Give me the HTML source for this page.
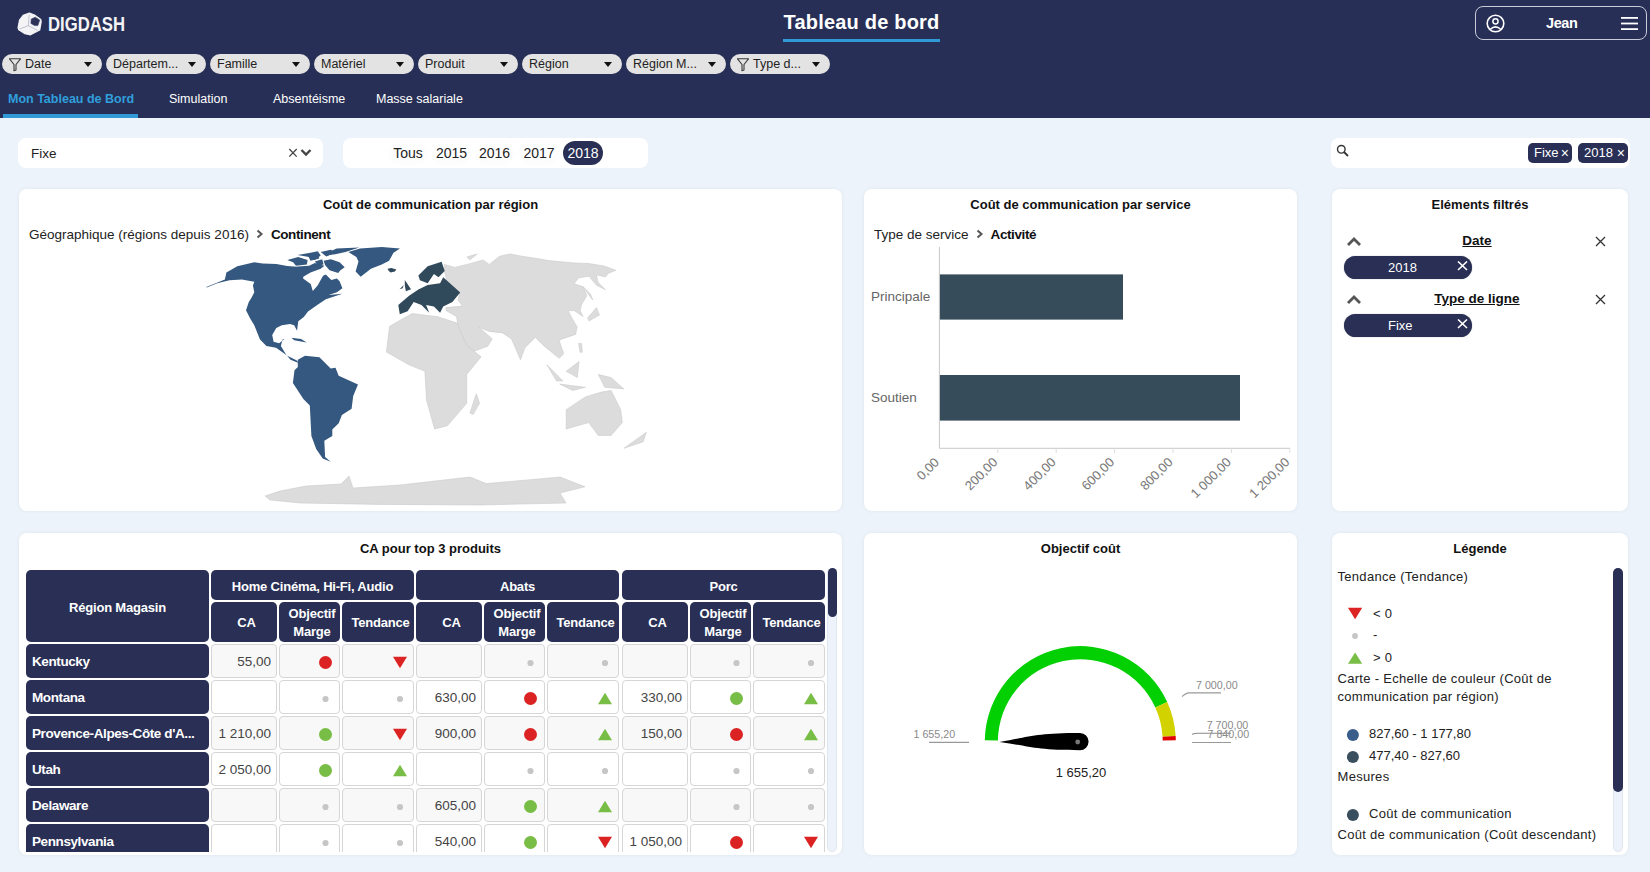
<!DOCTYPE html>
<html><head><meta charset="utf-8">
<style>
*{box-sizing:border-box;margin:0;padding:0}
html,body{width:1650px;height:872px;overflow:hidden}
body{background:#ecf3fb;font-family:"Liberation Sans",sans-serif;position:relative;color:#222}
.abs{position:absolute}
#hdr{position:absolute;left:0;top:0;width:1650px;height:118px;background:#282f56}
.logo-t{position:absolute;left:48px;top:12px;color:#f4f4f6;font-weight:bold;font-size:19px;letter-spacing:0.6px}
.title{position:absolute;left:773px;top:11px;width:177px;text-align:center;color:#fff;font-size:20px;font-weight:bold;white-space:nowrap;letter-spacing:0.2px}
.title-ul{position:absolute;left:783px;top:39px;width:157px;height:2.5px;background:#2f9ad6}
.user{position:absolute;left:1475px;top:6px;width:172px;height:34px;border:1px solid #c9cbd6;border-radius:8px}
.pill{position:absolute;top:54px;width:100px;height:20px;background:#e3e3e3;border-radius:10px;font-size:12.5px;color:#222;line-height:20px;padding-left:7px;white-space:nowrap}
.pill .car{position:absolute;right:10px;top:8px;width:0;height:0;border-left:4.5px solid transparent;border-right:4.5px solid transparent;border-top:5px solid #111}
.tab{position:absolute;top:92px;font-size:12.5px;color:#fff;white-space:nowrap}
.tab.act{color:#2f9fdc;font-weight:bold}
.tab-ul{position:absolute;left:3px;top:114px;width:135px;height:4px;background:#2f9ad6}
.box{position:absolute;background:#fff;border-radius:8px}
.panel{position:absolute;background:#fff;border-radius:8px;box-shadow:0 0 4px rgba(0,0,0,0.06)}
.ptitle{position:absolute;left:0;width:100%;top:8px;text-align:center;font-weight:bold;font-size:13px;color:#111;white-space:nowrap}
.yr{position:absolute;top:3px;height:24px;line-height:24px;text-align:center;font-size:14px;color:#222;border-radius:12px;background:#fdfdfd}
.yr.sel{background:#292f55;color:#fff}
.tag{position:absolute;top:5px;height:20px;line-height:20px;background:#292f55;color:#fff;border-radius:5px;font-size:13px;padding-left:6px;white-space:nowrap}
.tag .tx{position:absolute;right:3px;top:0;font-size:14px}
.fg{position:absolute;left:0;width:296px;height:50px}
.fgt{position:absolute;left:0;width:290px;top:0px;text-align:center;font-weight:bold;font-size:13.5px;color:#111;text-decoration:underline;text-underline-offset:1px}
.fpill{position:absolute;left:12px;top:23px;width:128px;height:23px;border-radius:11.5px;background:#292f55;color:#fff;font-size:13px;line-height:23px;padding-left:44px;box-shadow:0 0 1px #777}
.crumb{position:absolute;font-size:13.5px;color:#222;white-space:nowrap}
.crumb b{color:#111;letter-spacing:-0.4px}
.th{position:absolute;background:#292f55;color:#fff;font-weight:bold;font-size:13px;text-align:center;border-radius:5px;white-space:nowrap;padding-top:2px;letter-spacing:-0.2px}
.ths{padding-left:5px}
.th2{line-height:18px}
.rh{position:absolute;width:183px;height:34px;background:#292f55;color:#fff;font-weight:bold;font-size:13.5px;line-height:34px;padding-left:6px;padding-top:1px;border-radius:5px;white-space:nowrap;letter-spacing:-0.4px}
.td{position:absolute;height:34px;border:1px solid #d6d6d6;border-radius:4px;font-size:13.5px;color:#444;text-align:right;line-height:33px;padding-right:5px;white-space:nowrap}
.sbt{position:absolute;width:10px;background:#eef3fb;border:1px solid #e0e6ef;border-radius:5px}
.sbh{position:absolute;width:9px;background:#292f55;border-radius:5px}
.lg{position:absolute;color:#222;white-space:nowrap;line-height:1;letter-spacing:0.3px}
</style></head><body>
<div id="hdr">
  <svg class="abs" style="left:14px;top:8px" width="34" height="32" viewBox="0 0 34 32">
<path d="M15.42 4.96 L20.56 6.98 L26.80 11.38 L27.17 13.95 L25.70 22.03 L16.52 26.80 L11.01 25.70 L4.77 21.66 L4.04 19.82 L5.51 12.11 L9.18 7.34 Z" fill="#f4f4f6" stroke="#f4f4f6" stroke-width="1.2" stroke-linejoin="round"/>
<path d="M17.25 11.01 L21.29 9.18 L25.70 12.11 L23.86 17.62 L20.56 17.62 L16.89 15.42 Z" fill="#2b3157" stroke="#3b4066" stroke-width="0.6" stroke-linejoin="round"/>
<path d="M14.32 17.62 L15.23 6.61 M14.32 17.62 L5.87 20.93 M14.32 17.62 L23.49 22.39" stroke="#a9abbd" stroke-width="0.7" fill="none"/>
</svg>
  <svg class="abs" style="left:47px;top:12px" width="82" height="24" viewBox="0 0 82 24"><text x="1" y="19.2" font-family="Liberation Sans" font-weight="bold" font-size="19.5" fill="#f4f4f6" textLength="77" lengthAdjust="spacingAndGlyphs">DIGDASH</text></svg>
  <div class="title">Tableau de bord</div>
  <div class="title-ul"></div>
  <div class="user">
    <svg class="abs" style="left:10px;top:7px" width="19" height="19" viewBox="0 0 19 19"><circle cx="9.5" cy="9.5" r="8.3" fill="none" stroke="#fff" stroke-width="1.6"/><circle cx="9.5" cy="7.3" r="2.6" fill="none" stroke="#fff" stroke-width="1.5"/><path d="M4.3 15.3 Q9.5 10.5 14.7 15.3" fill="none" stroke="#fff" stroke-width="1.5"/></svg>
    <div class="abs" style="left:70px;top:8px;color:#fff;font-size:14.5px;font-weight:bold;letter-spacing:-0.4px">Jean</div>
    <svg class="abs" style="left:145px;top:9px" width="17" height="15" viewBox="0 0 17 15"><rect x="0" y="1" width="17" height="1.8" fill="#fff"/><rect x="0" y="6.6" width="17" height="1.8" fill="#fff"/><rect x="0" y="12.2" width="17" height="1.8" fill="#fff"/></svg>
  </div>
  <div class="pill" style="left:2px;padding-left:23px"><svg class="abs" style="left:6px;top:3px" width="14" height="15" viewBox="0 0 14 15"><path d="M1.5 1.8 H12.5 L8 7.5 V13 L6 13.8 V7.5 Z" fill="none" stroke="#3a3a3a" stroke-width="1.1" stroke-linejoin="round"/></svg>Date<span class="car"></span></div>
  <div class="pill" style="left:106px">Départem...<span class="car"></span></div>
  <div class="pill" style="left:210px">Famille<span class="car"></span></div>
  <div class="pill" style="left:314px">Matériel<span class="car"></span></div>
  <div class="pill" style="left:418px">Produit<span class="car"></span></div>
  <div class="pill" style="left:522px">Région<span class="car"></span></div>
  <div class="pill" style="left:626px">Région M...<span class="car"></span></div>
  <div class="pill" style="left:730px;padding-left:23px"><svg class="abs" style="left:6px;top:3px" width="14" height="15" viewBox="0 0 14 15"><path d="M1.5 1.8 H12.5 L8 7.5 V13 L6 13.8 V7.5 Z" fill="none" stroke="#3a3a3a" stroke-width="1.1" stroke-linejoin="round"/></svg>Type d...<span class="car"></span></div>
  <div class="tab act" style="left:8px">Mon Tableau de Bord</div>
  <div class="tab" style="left:169px">Simulation</div>
  <div class="tab" style="left:273px">Absentéisme</div>
  <div class="tab" style="left:376px">Masse salariale</div>
  <div class="tab-ul"></div>
</div>

<!-- controls -->
<div class="box" style="left:18px;top:138px;width:305px;height:30px">
  <div class="abs" style="left:13px;top:8px;font-size:13.5px;color:#222">Fixe</div>
  <svg class="abs" style="left:270px;top:10px" width="24" height="10" viewBox="0 0 24 10"><path d="M1.3 1 L8.7 8.6 M8.7 1 L1.3 8.6" stroke="#444" stroke-width="1.3"/><path d="M13.5 2 L18 6.5 L22.5 2" stroke="#444" stroke-width="2.4" fill="none"/></svg>
</div>
<div class="box" style="left:343px;top:138px;width:305px;height:30px">
  <div class="yr" style="left:45px;width:40px">Tous</div>
  <div class="yr" style="left:89px;width:39px">2015</div>
  <div class="yr" style="left:132px;width:39px">2016</div>
  <div class="yr" style="left:176px;width:40px">2017</div>
  <div class="yr sel" style="left:220px;width:40px">2018</div>
</div>
<div class="box" style="left:1331px;top:138px;width:299px;height:30px">
  <svg class="abs" style="left:5px;top:6px" width="14" height="14" viewBox="0 0 14 14"><circle cx="5.3" cy="5.3" r="3.8" fill="none" stroke="#333" stroke-width="1.4"/><path d="M8 8 L12 12" stroke="#333" stroke-width="1.8"/></svg>
  <div class="tag" style="left:197px;width:44px">Fixe<span class="tx">×</span></div>
  <div class="tag" style="left:247px;width:50px">2018<span class="tx">×</span></div>
</div>

<!-- panels -->
<div class="panel" style="left:19px;top:189px;width:823px;height:322px"><div class="ptitle">Coût de communication par région</div>
  <div class="crumb" style="left:10px;top:38px">Géographique (régions depuis 2016)<svg style="margin:0 7px 0 7px;vertical-align:0px" width="8" height="10" viewBox="0 0 8 10"><path d="M1.5 1.5 L5.5 5 L1.5 8.5" stroke="#555" stroke-width="2" fill="none"/></svg><b>Continent</b></div>
  <!--MAP--><svg class="abs" style="left:0;top:0" width="823" height="322" viewBox="19 189 823 322"><path fill="#34587f" d="M206.3 287.1 L224.9 279.6 L226.4 272.5 L237.3 266.3 L254.3 262.3 L262.6 263.4 L276.3 264.1 L287.3 266.1 L297.0 266.8 L297.5 266.5 L309.1 265.8 L314.9 262.9 L319.3 264.4 L324.4 265.8 L320.7 268.7 L310.5 272.4 L303.3 276.7 L303.1 278.5 L310.7 284.0 L312.8 290.9 L317.6 285.4 L323.1 275.8 L325.8 274.4 L331.3 279.9 L336.9 278.5 L339.6 281.3 L342.4 288.2 L336.9 292.3 L328.6 295.0 L342.4 293.7 L325.8 299.2 L317.6 304.7 L308.0 311.5 L303.8 317.1 L298.3 321.2 L297.0 330.8 L294.2 325.3 L290.1 323.9 L281.8 325.3 L276.3 328.1 L272.2 334.9 L273.6 341.8 L279.1 343.2 L284.6 339.1 L282.5 339.6 L280.9 346.1 L285.7 354.1 L290.5 359.7 L298.6 362.9 L296.9 360.5 L287.3 355.7 L276.1 347.7 L266.4 346.1 L260.0 339.6 L254.3 325.3 L250.2 318.4 L246.0 310.2 L248.8 301.9 L251.5 297.8 L254.3 292.3 L252.9 285.4 L255.0 279.9 L254.3 281.8 L241.9 279.6 L229.5 280.2 L217.2 283.3 L206.8 287.6 Z"/><path fill="#34587f" d="M348.4 252.0 L360.0 248.4 L381.8 246.9 L400.0 248.4 L393.5 252.7 L389.1 260.7 L381.8 264.4 L370.9 268.7 L360.7 276.7 L355.6 271.6 L358.5 261.5 L356.4 257.1 Z"/><path fill="#34587f" d="M323.6 260.7 L330.9 259.3 L339.6 262.2 L344.7 267.3 L340.4 270.2 L338.2 273.1 L329.5 270.2 L325.1 265.1 Z"/><path fill="#34587f" d="M336.7 248.4 L359.3 247.6 L345.5 252.0 L335.3 254.2 L325.1 255.6 L323.6 254.2 Z"/><path fill="#34587f" d="M287.3 260.0 L298.2 257.1 L307.6 260.0 L306.9 264.4 L296.0 265.8 L293.1 262.2 Z"/><path fill="#34587f" d="M297.5 254.9 L310.5 252.7 L317.8 251.3 L320.7 255.6 L314.9 260.0 L309.1 257.1 Z"/><path fill="#34587f" d="M314.9 261.5 L322.2 259.3 L323.6 264.4 L317.8 265.8 Z"/><path fill="#34587f" d="M320.7 252.0 L330.9 249.8 L335.3 252.7 L326.5 256.4 Z"/><path fill="#34587f" d="M307.6 254.9 L317.8 254.2 L319.3 258.5 L310.5 260.7 Z"/><path fill="#34587f" d="M291.4 337.7 L301.1 339.1 L306.6 342.5 L294.2 340.2 Z"/><path fill="#34587f" d="M297.8 359.7 L305.0 355.7 L319.4 357.3 L330.7 368.6 L335.5 367.8 L338.7 375.8 L358.0 384.6 L353.2 395.9 L351.6 408.7 L341.9 415.1 L338.7 423.2 L332.3 429.6 L332.3 436.0 L324.3 440.8 L325.1 456.9 L330.7 461.7 L322.7 458.5 L316.2 448.9 L311.4 436.0 L309.8 405.5 L303.4 399.1 L292.9 383.0 L294.5 370.2 L297.8 366.9 Z"/><path fill="#dcdcdc" stroke="#c4c4c4" stroke-width="0.5" d="M444.5 264.4 L454.9 267.4 L466.8 264.4 L483.2 259.9 L489.2 264.4 L499.6 256.2 L510.0 253.9 L522.0 256.2 L536.9 258.4 L548.8 260.6 L574.1 262.9 L589.0 263.6 L603.9 265.9 L615.9 270.3 L608.4 273.3 L605.4 277.0 L596.5 274.8 L598.0 282.3 L605.4 289.7 L596.5 285.2 L589.0 276.3 L578.6 277.8 L574.1 283.7 L583.1 286.7 L586.8 295.7 L581.6 304.6 L580.1 310.6 L583.1 316.5 L574.1 310.6 L568.2 310.6 L571.1 316.5 L577.1 327.0 L575.6 334.4 L562.2 338.9 L559.2 340.4 L563.7 353.8 L559.2 358.3 L551.8 352.3 L544.3 346.3 L535.4 337.4 L524.9 347.8 L520.5 359.8 L511.5 338.9 L502.6 332.9 L489.2 331.4 L478.7 327.0 L492.2 338.9 L487.7 346.3 L471.3 352.3 L459.4 332.9 L456.4 316.5 L446.0 310.6 L446.0 307.6 L462.4 306.1 L457.9 300.1 L459.4 294.2 L447.5 283.7 L444.5 271.8 Z"/><path fill="#dcdcdc" stroke="#c4c4c4" stroke-width="0.5" d="M587.5 318.0 L596.5 307.6 L599.5 315.0 L589.0 321.0 Z"/><path fill="#dcdcdc" stroke="#c4c4c4" stroke-width="0.5" d="M583.1 286.7 L590.5 294.2 L592.8 300.1 L588.3 294.2 Z"/><path fill="#dcdcdc" stroke="#c4c4c4" stroke-width="0.5" d="M578.6 343.4 L581.6 343.4 L582.3 352.3 L580.1 352.3 Z"/><path fill="#dcdcdc" stroke="#c4c4c4" stroke-width="0.5" d="M466.8 256.9 L477.3 253.9 L469.8 259.9 Z"/><path fill="#30495b" d="M398.3 305.0 L409.1 295.7 L418.4 289.5 L427.7 284.9 L440.1 283.3 L443.2 277.2 L460.2 292.6 L452.4 301.9 L443.2 306.6 L440.1 312.8 L433.9 306.6 L426.1 305.0 L429.2 312.8 L421.5 305.0 L413.7 301.9 L407.6 311.2 L399.8 314.3 Z"/><path fill="#30495b" d="M418.4 275.6 L427.7 266.3 L441.6 261.7 L444.7 271.0 L438.5 277.2 L433.9 274.1 L427.7 283.3 L419.9 280.2 Z"/><path fill="#30495b" d="M404.8 279.9 L411.0 289.2 L405.8 291.3 L404.8 285.1 Z"/><path fill="#30495b" d="M399.6 289.2 L403.7 285.1 L402.7 288.2 Z"/><path fill="#30495b" d="M387.6 268.7 L391.3 268.0 L396.4 269.5 L394.9 271.6 L390.5 272.4 L388.4 270.5 Z"/><path fill="#dcdcdc" stroke="#c4c4c4" stroke-width="0.5" d="M389.6 326.3 L412.1 313.5 L437.8 316.7 L457.0 323.1 L466.7 345.5 L481.1 356.8 L466.7 374.4 L466.7 403.3 L447.4 425.8 L434.6 429.0 L426.5 400.1 L424.9 371.2 L408.9 364.8 L386.4 352.0 Z"/><path fill="#dcdcdc" stroke="#c4c4c4" stroke-width="0.5" d="M469.9 413.0 L476.3 393.7 L479.5 403.3 L473.1 414.6 Z"/><path fill="#dcdcdc" stroke="#c4c4c4" stroke-width="0.5" d="M546.9 364.8 L563.0 380.9 L556.5 380.9 Z"/><path fill="#dcdcdc" stroke="#c4c4c4" stroke-width="0.5" d="M566.2 371.2 L579.0 361.6 L577.4 377.6 Z"/><path fill="#dcdcdc" stroke="#c4c4c4" stroke-width="0.5" d="M598.3 374.4 L611.1 377.6 L623.9 388.9 L604.7 387.3 Z"/><path fill="#dcdcdc" stroke="#c4c4c4" stroke-width="0.5" d="M559.7 384.1 L585.4 387.3 L572.6 390.5 Z"/><path fill="#dcdcdc" stroke="#c4c4c4" stroke-width="0.5" d="M566.2 409.7 L585.4 396.9 L601.5 392.1 L611.1 390.5 L620.7 409.7 L622.3 422.6 L611.1 435.4 L598.3 435.4 L588.6 422.6 L566.2 429.0 Z"/><path fill="#dcdcdc" stroke="#c4c4c4" stroke-width="0.5" d="M623.9 448.3 L646.4 432.2 L643.2 441.8 Z"/><path fill="#dcdcdc" stroke="#c4c4c4" stroke-width="0.5" d="M265.0 496.0 L280.0 491.0 L306.0 486.0 L341.0 484.0 L349.0 476.0 L353.0 488.0 L400.0 485.0 L470.0 477.0 L486.0 483.6 L560.0 477.0 L585.0 486.8 L560.0 493.0 L566.0 503.0 L480.0 505.0 L380.0 504.4 L300.0 503.0 L270.0 500.0 Z"/></svg><!--/MAP-->
</div>
<div class="panel" style="left:864px;top:189px;width:433px;height:322px"><div class="ptitle">Coût de communication par service</div>
  <div class="crumb" style="left:10px;top:38px">Type de service<svg style="margin:0 7px 0 7px;vertical-align:0px" width="8" height="10" viewBox="0 0 8 10"><path d="M1.5 1.5 L5.5 5 L1.5 8.5" stroke="#555" stroke-width="2" fill="none"/></svg><b>Activité</b></div>
  <svg class="abs" style="left:0;top:0" width="433" height="322" viewBox="0 0 433 322">
    <rect x="75.39999999999998" y="85.39999999999998" width="183.60000000000002" height="45.2" fill="#364c5b"/>
    <rect x="75.39999999999998" y="186" width="300.6" height="45.6" fill="#364c5b"/>
    <path d="M75.39999999999998 58 V259.3 H426" stroke="#c8c8c8" stroke-width="1" fill="none"/>
    <g font-family="Liberation Sans" font-size="13" fill="#777"><text x="75.9" y="274.0" transform="rotate(-45 75.9 274.0)" text-anchor="end">0,00</text><line x1="133.79999999999995" y1="259" x2="133.79999999999995" y2="264" stroke="#ddd" stroke-width="1"/><text x="134.3" y="274.0" transform="rotate(-45 134.3 274.0)" text-anchor="end">200,00</text><line x1="192.20000000000005" y1="259" x2="192.20000000000005" y2="264" stroke="#ddd" stroke-width="1"/><text x="192.7" y="274.0" transform="rotate(-45 192.7 274.0)" text-anchor="end">400,00</text><line x1="250.5999999999999" y1="259" x2="250.5999999999999" y2="264" stroke="#ddd" stroke-width="1"/><text x="251.1" y="274.0" transform="rotate(-45 251.1 274.0)" text-anchor="end">600,00</text><line x1="309" y1="259" x2="309" y2="264" stroke="#ddd" stroke-width="1"/><text x="309.5" y="274.0" transform="rotate(-45 309.5 274.0)" text-anchor="end">800,00</text><line x1="367.4000000000001" y1="259" x2="367.4000000000001" y2="264" stroke="#ddd" stroke-width="1"/><text x="367.9" y="274.0" transform="rotate(-45 367.9 274.0)" text-anchor="end">1 000,00</text><line x1="425.79999999999995" y1="259" x2="425.79999999999995" y2="264" stroke="#ddd" stroke-width="1"/><text x="426.3" y="274.0" transform="rotate(-45 426.3 274.0)" text-anchor="end">1 200,00</text></g>
    <text x="7" y="112" font-family="Liberation Sans" font-size="13.5" fill="#666">Principale</text>
    <text x="7" y="213" font-family="Liberation Sans" font-size="13.5" fill="#666">Soutien</text>
  </svg>
</div>
<div class="panel" style="left:1332px;top:189px;width:296px;height:322px"><div class="ptitle">Eléments filtrés</div>
  <div class="fg" style="top:44px"><svg class="abs" style="left:14px;top:3px" width="16" height="11" viewBox="0 0 16 11"><path d="M2 9 L8 3 L14 9" stroke="#555" stroke-width="2.8" fill="none"/></svg>
    <div class="fgt">Date</div>
    <svg class="abs" style="left:263px;top:3px" width="11" height="11" viewBox="0 0 11 11"><path d="M1 1 L10 10 M10 1 L1 10" stroke="#333" stroke-width="1.3"/></svg>
    <div class="fpill">2018<svg class="abs" style="left:113px;top:5px" width="11" height="10" viewBox="0 0 11 10"><path d="M1 0.5 L10 9 M10 0.5 L1 9" stroke="#fff" stroke-width="1.6"/></svg></div>
  </div>
  <div class="fg" style="top:102px"><svg class="abs" style="left:14px;top:3px" width="16" height="11" viewBox="0 0 16 11"><path d="M2 9 L8 3 L14 9" stroke="#555" stroke-width="2.8" fill="none"/></svg>
    <div class="fgt">Type de ligne</div>
    <svg class="abs" style="left:263px;top:3px" width="11" height="11" viewBox="0 0 11 11"><path d="M1 1 L10 10 M10 1 L1 10" stroke="#333" stroke-width="1.3"/></svg>
    <div class="fpill">Fixe<svg class="abs" style="left:113px;top:5px" width="11" height="10" viewBox="0 0 11 10"><path d="M1 0.5 L10 9 M10 0.5 L1 9" stroke="#fff" stroke-width="1.6"/></svg></div>
  </div>
</div>
<div class="panel" style="left:19px;top:533px;width:823px;height:322px"><div class="ptitle">CA pour top 3 produits</div>
  <!--TABLE--><div class="abs" style="left:0;top:0;width:823px;height:319px;overflow:hidden"><div class="th" style="left:7px;top:37px;width:183px;height:72px;line-height:72px">Région Magasin</div><div class="th" style="left:192px;top:37px;width:203px;height:30px;line-height:30px">Home Cinéma, Hi-Fi, Audio</div><div class="th ths" style="left:192px;top:69px;width:66px;height:40px;line-height:38px">CA</div><div class="th th2 ths" style="left:260px;top:69px;width:61px;height:40px;padding-top:3px;line-height:18px">Objectif<br>Marge</div><div class="th ths" style="left:323px;top:69px;width:72px;height:40px;line-height:38px">Tendance</div><div class="th" style="left:397px;top:37px;width:203px;height:30px;line-height:30px">Abats</div><div class="th ths" style="left:397px;top:69px;width:66px;height:40px;line-height:38px">CA</div><div class="th th2 ths" style="left:465px;top:69px;width:61px;height:40px;padding-top:3px;line-height:18px">Objectif<br>Marge</div><div class="th ths" style="left:528px;top:69px;width:72px;height:40px;line-height:38px">Tendance</div><div class="th" style="left:603px;top:37px;width:203px;height:30px;line-height:30px">Porc</div><div class="th ths" style="left:603px;top:69px;width:66px;height:40px;line-height:38px">CA</div><div class="th th2 ths" style="left:671px;top:69px;width:61px;height:40px;padding-top:3px;line-height:18px">Objectif<br>Marge</div><div class="th ths" style="left:734px;top:69px;width:72px;height:40px;line-height:38px">Tendance</div><div class="rh" style="left:7px;top:111px">Kentucky</div><div class="td" style="left:192px;top:111px;width:66px;background:#f8f8f8">55,00</div><div class="td" style="left:260px;top:111px;width:61px;background:#f8f8f8"></div><div class="td" style="left:323px;top:111px;width:72px;background:#f8f8f8"></div><div class="td" style="left:397px;top:111px;width:66px;background:#f8f8f8"></div><div class="td" style="left:465px;top:111px;width:61px;background:#f8f8f8"></div><div class="td" style="left:528px;top:111px;width:72px;background:#f8f8f8"></div><div class="td" style="left:603px;top:111px;width:66px;background:#f8f8f8"></div><div class="td" style="left:671px;top:111px;width:61px;background:#f8f8f8"></div><div class="td" style="left:734px;top:111px;width:72px;background:#f8f8f8"></div><div class="rh" style="left:7px;top:147px">Montana</div><div class="td" style="left:192px;top:147px;width:66px;background:#fff"></div><div class="td" style="left:260px;top:147px;width:61px;background:#fff"></div><div class="td" style="left:323px;top:147px;width:72px;background:#fff"></div><div class="td" style="left:397px;top:147px;width:66px;background:#fff">630,00</div><div class="td" style="left:465px;top:147px;width:61px;background:#fff"></div><div class="td" style="left:528px;top:147px;width:72px;background:#fff"></div><div class="td" style="left:603px;top:147px;width:66px;background:#fff">330,00</div><div class="td" style="left:671px;top:147px;width:61px;background:#fff"></div><div class="td" style="left:734px;top:147px;width:72px;background:#fff"></div><div class="rh" style="left:7px;top:183px">Provence-Alpes-Côte d'A...</div><div class="td" style="left:192px;top:183px;width:66px;background:#f8f8f8">1 210,00</div><div class="td" style="left:260px;top:183px;width:61px;background:#f8f8f8"></div><div class="td" style="left:323px;top:183px;width:72px;background:#f8f8f8"></div><div class="td" style="left:397px;top:183px;width:66px;background:#f8f8f8">900,00</div><div class="td" style="left:465px;top:183px;width:61px;background:#f8f8f8"></div><div class="td" style="left:528px;top:183px;width:72px;background:#f8f8f8"></div><div class="td" style="left:603px;top:183px;width:66px;background:#f8f8f8">150,00</div><div class="td" style="left:671px;top:183px;width:61px;background:#f8f8f8"></div><div class="td" style="left:734px;top:183px;width:72px;background:#f8f8f8"></div><div class="rh" style="left:7px;top:219px">Utah</div><div class="td" style="left:192px;top:219px;width:66px;background:#fff">2 050,00</div><div class="td" style="left:260px;top:219px;width:61px;background:#fff"></div><div class="td" style="left:323px;top:219px;width:72px;background:#fff"></div><div class="td" style="left:397px;top:219px;width:66px;background:#fff"></div><div class="td" style="left:465px;top:219px;width:61px;background:#fff"></div><div class="td" style="left:528px;top:219px;width:72px;background:#fff"></div><div class="td" style="left:603px;top:219px;width:66px;background:#fff"></div><div class="td" style="left:671px;top:219px;width:61px;background:#fff"></div><div class="td" style="left:734px;top:219px;width:72px;background:#fff"></div><div class="rh" style="left:7px;top:255px">Delaware</div><div class="td" style="left:192px;top:255px;width:66px;background:#f8f8f8"></div><div class="td" style="left:260px;top:255px;width:61px;background:#f8f8f8"></div><div class="td" style="left:323px;top:255px;width:72px;background:#f8f8f8"></div><div class="td" style="left:397px;top:255px;width:66px;background:#f8f8f8">605,00</div><div class="td" style="left:465px;top:255px;width:61px;background:#f8f8f8"></div><div class="td" style="left:528px;top:255px;width:72px;background:#f8f8f8"></div><div class="td" style="left:603px;top:255px;width:66px;background:#f8f8f8"></div><div class="td" style="left:671px;top:255px;width:61px;background:#f8f8f8"></div><div class="td" style="left:734px;top:255px;width:72px;background:#f8f8f8"></div><div class="rh" style="left:7px;top:291px">Pennsylvania</div><div class="td" style="left:192px;top:291px;width:66px;background:#fff"></div><div class="td" style="left:260px;top:291px;width:61px;background:#fff"></div><div class="td" style="left:323px;top:291px;width:72px;background:#fff"></div><div class="td" style="left:397px;top:291px;width:66px;background:#fff">540,00</div><div class="td" style="left:465px;top:291px;width:61px;background:#fff"></div><div class="td" style="left:528px;top:291px;width:72px;background:#fff"></div><div class="td" style="left:603px;top:291px;width:66px;background:#fff">1 050,00</div><div class="td" style="left:671px;top:291px;width:61px;background:#fff"></div><div class="td" style="left:734px;top:291px;width:72px;background:#fff"></div><svg class="abs" style="left:0;top:0" width="823" height="322"><circle cx="306.5" cy="129.5" r="6.5" fill="#dc2323"/><path d="M374 123.7 H388 L381 135.3 Z" fill="#dc2323"/><circle cx="511.5" cy="130.0" r="3.1" fill="#c6c6c6"/><circle cx="586" cy="130.0" r="3.1" fill="#c6c6c6"/><circle cx="717.5" cy="130.0" r="3.1" fill="#c6c6c6"/><circle cx="792" cy="130.0" r="3.1" fill="#c6c6c6"/><circle cx="306.5" cy="166.0" r="3.1" fill="#c6c6c6"/><circle cx="381" cy="166.0" r="3.1" fill="#c6c6c6"/><circle cx="511.5" cy="165.5" r="6.5" fill="#dc2323"/><path d="M579 171.3 H593 L586 159.7 Z" fill="#78bd45"/><circle cx="717.5" cy="165.5" r="6.5" fill="#78bd45"/><path d="M785 171.3 H799 L792 159.7 Z" fill="#78bd45"/><circle cx="306.5" cy="201.5" r="6.5" fill="#78bd45"/><path d="M374 195.7 H388 L381 207.3 Z" fill="#dc2323"/><circle cx="511.5" cy="201.5" r="6.5" fill="#dc2323"/><path d="M579 207.3 H593 L586 195.7 Z" fill="#78bd45"/><circle cx="717.5" cy="201.5" r="6.5" fill="#dc2323"/><path d="M785 207.3 H799 L792 195.7 Z" fill="#78bd45"/><circle cx="306.5" cy="237.5" r="6.5" fill="#78bd45"/><path d="M374 243.3 H388 L381 231.7 Z" fill="#78bd45"/><circle cx="511.5" cy="238.0" r="3.1" fill="#c6c6c6"/><circle cx="586" cy="238.0" r="3.1" fill="#c6c6c6"/><circle cx="717.5" cy="238.0" r="3.1" fill="#c6c6c6"/><circle cx="792" cy="238.0" r="3.1" fill="#c6c6c6"/><circle cx="306.5" cy="274.0" r="3.1" fill="#c6c6c6"/><circle cx="381" cy="274.0" r="3.1" fill="#c6c6c6"/><circle cx="511.5" cy="273.5" r="6.5" fill="#78bd45"/><path d="M579 279.3 H593 L586 267.7 Z" fill="#78bd45"/><circle cx="717.5" cy="274.0" r="3.1" fill="#c6c6c6"/><circle cx="792" cy="274.0" r="3.1" fill="#c6c6c6"/><circle cx="306.5" cy="310.0" r="3.1" fill="#c6c6c6"/><circle cx="381" cy="310.0" r="3.1" fill="#c6c6c6"/><circle cx="511.5" cy="309.5" r="6.5" fill="#78bd45"/><path d="M579 303.7 H593 L586 315.3 Z" fill="#dc2323"/><circle cx="717.5" cy="309.5" r="6.5" fill="#dc2323"/><path d="M785 303.7 H799 L792 315.3 Z" fill="#dc2323"/></svg></div><div class="sbt" style="left:808px;top:35px;height:284px"></div><div class="sbh" style="left:808.5px;top:35px;height:49px"></div><!--/TABLE-->
</div>
<div class="panel" style="left:864px;top:533px;width:433px;height:322px"><div class="ptitle">Objectif coût</div>
  <!--GAUGE--><svg class="abs" style="left:0;top:0" width="433" height="322" viewBox="0 0 433 322"><path fill="#02d002" d="M120.81 207.27 A95.5 95.5 0 0 1 303.20 169.00 L291.28 174.43 A82.4 82.4 0 0 0 133.91 207.45 Z"/><path fill="#d2d200" d="M303.20 169.00 A95.5 95.5 0 0 1 311.64 203.10 L298.56 203.86 A82.4 82.4 0 0 0 291.28 174.43 Z"/><path fill="#e00000" d="M311.64 203.10 A95.5 95.5 0 0 1 311.79 207.27 L298.69 207.45 A82.4 82.4 0 0 0 298.56 203.86 Z"/><path fill="#000" d="M135.5 209 C165.5 204 171 200.00000000000003 216 200.00000000000003 A8.6 8.6 0 0 1 216 217.20000000000002 C171 217.20000000000002 165.5 213 135.5 209 Z"/><circle cx="213.70000000000005" cy="209" r="2.4" fill="#777"/><text x="49.5" y="205" font-family="Liberation Sans" font-size="10.7" fill="#8a8a8a">1 655,20</text><line x1="65" y1="209.29999999999995" x2="105" y2="209.29999999999995" stroke="#999" stroke-width="1.2"/><text x="332" y="156" font-family="Liberation Sans" font-size="10.7" fill="#8a8a8a">7 000,00</text><path d="M318 163.60000000000002 Q322 160 325 159.89999999999998 H357" stroke="#999" stroke-width="1.1" fill="none"/><text x="342.70000000000005" y="195.5" font-family="Liberation Sans" font-size="10.7" fill="#8a8a8a">7 700,00</text><text x="343.5" y="204.60000000000002" font-family="Liberation Sans" font-size="10.7" fill="#8a8a8a">7 840,00</text><path d="M328 201.20000000000005 Q331 200.29999999999995 334.4000000000001 200.29999999999995 H367" stroke="#888" stroke-width="1.1" fill="none"/><line x1="328" y1="209.5" x2="367" y2="209.5" stroke="#999" stroke-width="1.2"/><text x="217" y="244" font-family="Liberation Sans" font-size="13" fill="#222" text-anchor="middle">1 655,20</text></svg><!--/GAUGE-->
</div>
<div class="panel" style="left:1332px;top:533px;width:296px;height:322px"><div class="ptitle">Légende</div>
  <!--LEG--><div class="lg" style="left:5.5px;top:37.2px;font-size:13px">Tendance (Tendance)</div><div class="lg" style="left:41.0px;top:73.7px;font-size:13px">&lt; 0</div><div class="lg" style="left:41.0px;top:95.2px;font-size:13px">-</div><div class="lg" style="left:41.0px;top:117.9px;font-size:13px">&gt; 0</div><div class="lg" style="left:5.5px;top:139.2px;font-size:13px">Carte - Echelle de couleur (Coût de</div><div class="lg" style="left:5.5px;top:157.2px;font-size:13px">communication par région)</div><div class="lg" style="left:37.0px;top:194.3px;font-size:13px;letter-spacing:0">827,60 - 1 177,80</div><div class="lg" style="left:37.0px;top:216.2px;font-size:13px;letter-spacing:0">477,40 - 827,60</div><div class="lg" style="left:5.5px;top:237.0px;font-size:13px">Mesures</div><div class="lg" style="left:37.0px;top:274.2px;font-size:13px">Coût de communication</div><div class="lg" style="left:5.5px;top:295.2px;font-size:13px">Coût de communication (Coût descendant)</div><svg class="abs" style="left:0;top:0" width="296" height="322">
<path d="M16 74.79999999999995 H30.200000000000045 L23.09999999999991 86.29999999999995 Z" fill="#dc2323"/>
<circle cx="23" cy="103" r="2.9" fill="#c6c6c6"/>
<path d="M16 130.70000000000005 H30.200000000000045 L23.09999999999991 119.60000000000002 Z" fill="#78bd45"/>
<circle cx="20.90000000000009" cy="201.89999999999998" r="6" fill="#3b5d89"/>
<circle cx="20.90000000000009" cy="223.89999999999998" r="6" fill="#3a4f5e"/>
<circle cx="20.90000000000009" cy="281.9" r="6" fill="#3a4f5e"/>
</svg><div class="sbt" style="left:281px;top:35px;height:283.5px;width:10px"></div><div class="sbh" style="left:281.29999999999995px;top:35px;height:223.79999999999995px;width:9.6px"></div><!--/LEG-->
</div>
</body></html>
